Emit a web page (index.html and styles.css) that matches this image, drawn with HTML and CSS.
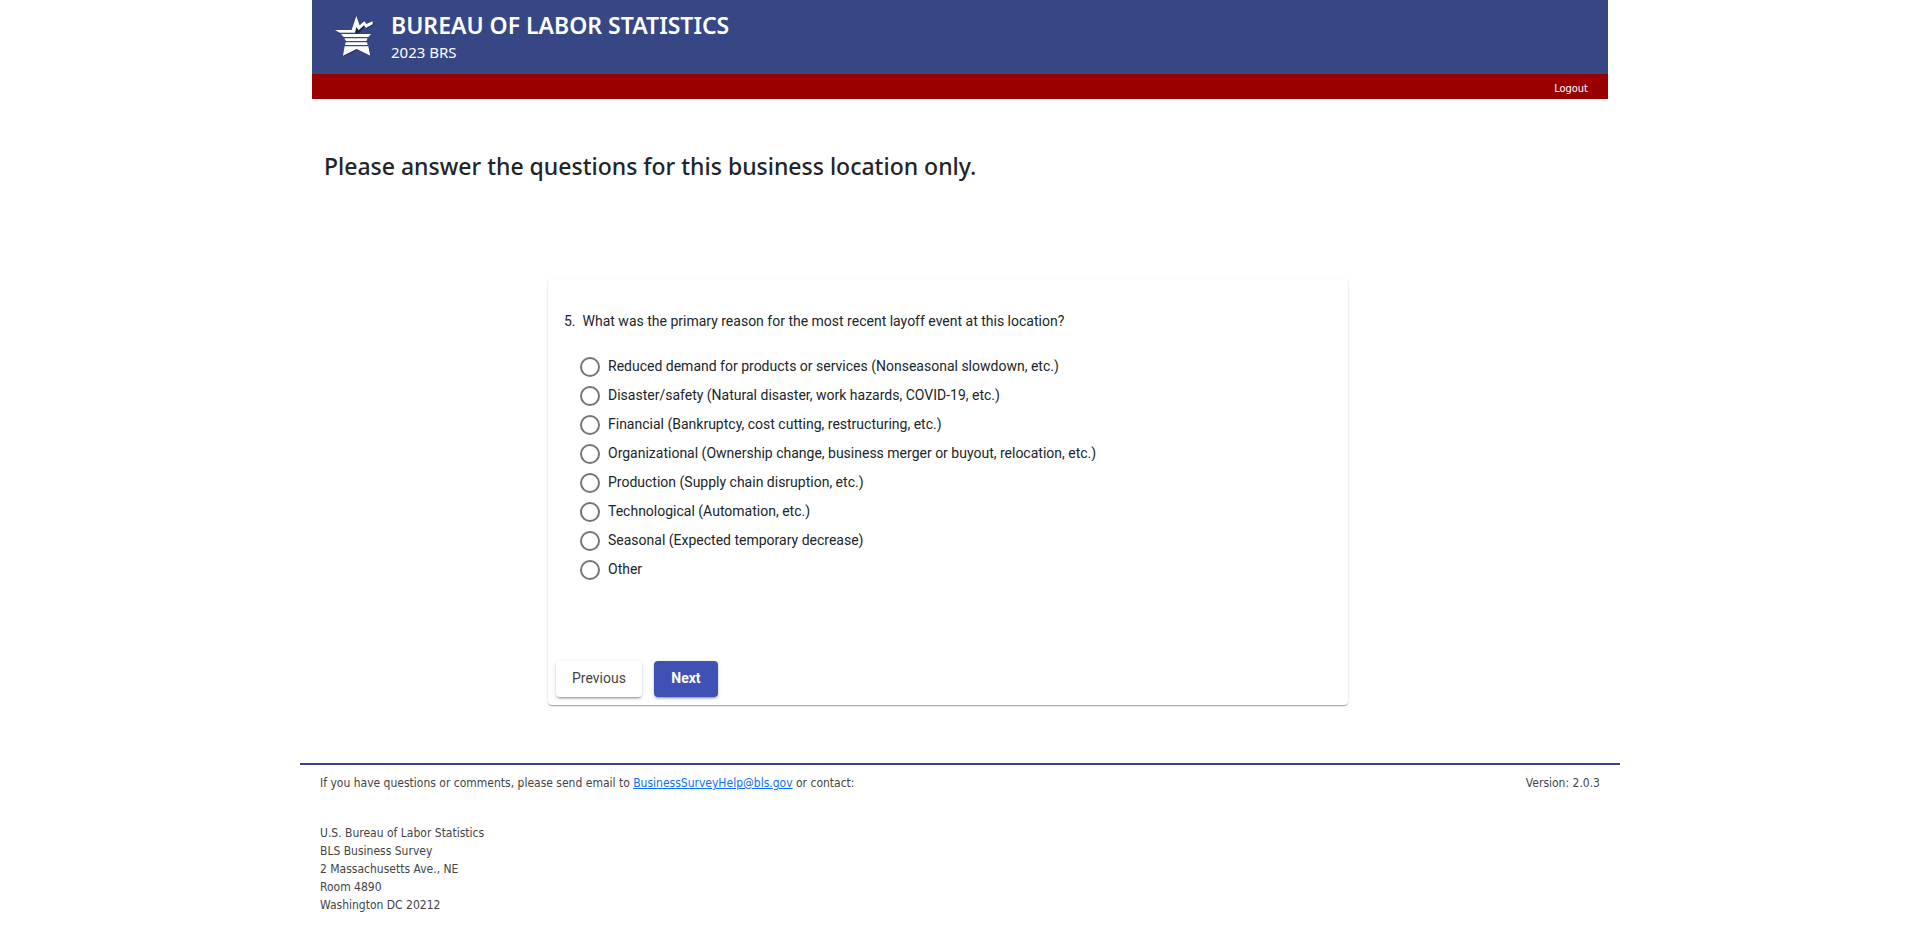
FILE: index.html
```html
<!DOCTYPE html>
<html lang="en">
<head>
  <meta charset="UTF-8">
  <meta name="viewport" content="width=device-width, initial-scale=1.0">
  <title>2023 BRS</title>
  <link rel="stylesheet" href="styles.css">
</head>
<body>

<div class="container">
  <header>
    <div class="banner">
      <svg class="logo" viewBox="27 21 123 138" aria-hidden="true">
        <g class="logo-shadow" transform="translate(2 2)">
          <path d="M30 75H80L94 33L104 61L118 49L124 57L143 49V58L123 69L117 61L106 75L100 83H44Z"/>
          <path d="M59 124H130L136 152L95 132L54 152Z"/>
        </g>
        <g class="logo-star">
          <path d="M30 75H80L94 33L104 61L118 49L124 57L143 49V58L123 69L117 61L101 76L94 66L90 83H44Z"/>
          <path d="M48 87H138L130 96H56ZM58 100H128L124 108H63ZM62 112H126L128 120H60ZM59 124H130L136 152L95 132L54 152Z"/>
        </g>
      </svg>
      <div class="banner-text">
        <h1>BUREAU OF LABOR STATISTICS</h1>
        <p>2023 BRS</p>
      </div>
    </div>
    <nav class="menu-bar">
      <a href="#">Logout</a>
    </nav>
  </header>

  <main>
    <h2>Please answer the questions for this business location only.</h2>

    <form class="card">
      <fieldset>
        <legend><span class="number">5.</span>What was the primary reason for the most recent layoff event at this location?</legend>
        <div class="options">
          <label><input type="radio" name="reason" value="1">Reduced demand for products or services (Nonseasonal slowdown, etc.)</label>
          <label><input type="radio" name="reason" value="2">Disaster/safety (Natural disaster, work hazards, COVID-19, etc.)</label>
          <label><input type="radio" name="reason" value="3">Financial (Bankruptcy, cost cutting, restructuring, etc.)</label>
          <label><input type="radio" name="reason" value="4">Organizational (Ownership change, business merger or buyout, relocation, etc.)</label>
          <label><input type="radio" name="reason" value="5">Production (Supply chain disruption, etc.)</label>
          <label><input type="radio" name="reason" value="6">Technological (Automation, etc.)</label>
          <label><input type="radio" name="reason" value="7">Seasonal (Expected temporary decrease)</label>
          <label><input type="radio" name="reason" value="8">Other</label>
        </div>
      </fieldset>
      <div class="actions">
        <button type="button" class="btn">Previous</button>
        <button type="button" class="btn btn-primary">Next</button>
      </div>
    </form>
  </main>
</div>

<footer>
  <div class="footer-row">
    <p>If you have questions or comments, please send email to <a href="mailto:BusinessSurveyHelp@bls.gov">BusinessSurveyHelp@bls.gov</a> or contact:</p>
    <p>Version: 2.0.3</p>
  </div>
  <address>
    U.S. Bureau of Labor Statistics<br>
    BLS Business Survey<br>
    2 Massachusetts Ave., NE<br>
    Room 4890<br>
    Washington DC 20212
  </address>
</footer>

</body>
</html>
```
FILE: styles.css
```css
* {
  box-sizing: border-box;
}

body {
  margin: 0;
  background-color: #fff;
  color: #212529;
  font-family: "Segoe UI", "Noto Sans", sans-serif;
}

h1, h2, p {
  margin: 0;
}

.container {
  max-width: 1320px;
  margin: 0 auto;
  padding: 0 12px;
}

/* Header */
.banner {
  display: flex;
  gap: 16px;
  height: 74px;
  padding: 12px 22px 0;
  background-color: #374785;
  color: #fff;
}

.logo {
  width: 41px;
  height: 46px;
}

.logo-star {
  fill: #fff;
}

.logo-shadow {
  fill: #1c2547;
}

.banner h1 {
  font-size: 23px;
  font-weight: 600;
  line-height: 27px;
}

.banner p {
  font-size: 15px;
  line-height: 26px;
}

.menu-bar {
  display: flex;
  justify-content: flex-end;
  height: 25px;
  padding: 0 20px;
  background-color: #990000;
}

.menu-bar a {
  color: #fff;
  font-family: Tahoma, "DejaVu Sans Condensed", sans-serif;
  font-size: 11px;
  line-height: 30px;
  text-decoration: none;
}

/* Question */
main {
  padding-right: 24px;
}

h2 {
  padding: 52px 12px 0;
  font-size: 23px;
  font-weight: 500;
  line-height: 30px;
}

.card {
  max-width: 800px;
  margin: 98px auto 0;
  padding: 32px 8px 8px;
  border-radius: 4px;
  box-shadow: 0 2px 1px -1px rgba(0, 0, 0, 0.2), 0 1px 1px 0 rgba(0, 0, 0, 0.14), 0 1px 3px 0 rgba(0, 0, 0, 0.12);
  font-family: Roboto, sans-serif;
  font-size: 14px;
}

.card fieldset {
  margin: 0;
  padding: 0 8px;
  border: 0;
}

.card legend {
  padding: 0;
  line-height: 20px;
}

.number {
  margin-right: 7px;
}

.options {
  padding: 21px 16px 0;
}

.options label {
  display: flex;
  align-items: flex-start;
  gap: 8px;
  height: 29px;
  line-height: 29px;
}

.options input {
  appearance: none;
  width: 20px;
  height: 20px;
  margin: 5px 0 0;
  border: 2px solid #757575;
  border-radius: 50%;
}

.options input:checked {
  border-color: #3f51b5;
  background: radial-gradient(#3f51b5 5px, transparent 6px);
}

.actions {
  display: flex;
  gap: 12px;
  padding-top: 77px;
}

.btn {
  min-width: 64px;
  height: 36px;
  padding: 0 16px 2px;
  border: 0;
  border-radius: 4px;
  background-color: #fff;
  box-shadow: 0 3px 1px -2px rgba(0, 0, 0, 0.2), 0 2px 2px 0 rgba(0, 0, 0, 0.14), 0 1px 5px 0 rgba(0, 0, 0, 0.12);
  color: #444;
  font-family: Roboto, sans-serif;
  font-size: 14px;
  cursor: pointer;
}

.btn-primary {
  background-color: #3f51b5;
  color: #fff;
  font-weight: 700;
}

/* Footer */
footer {
  max-width: 1320px;
  margin: 58px auto 0;
  padding: 9px 20px 20px;
  border-top: 2px solid #374785;
  color: #444;
  font-family: Tahoma, "DejaVu Sans Condensed", sans-serif;
  font-size: 12px;
  line-height: 18px;
}

.footer-row {
  display: flex;
  justify-content: space-between;
}

footer a {
  color: #0d6efd;
}

address {
  margin-top: 32px;
  font-style: normal;
}
```
